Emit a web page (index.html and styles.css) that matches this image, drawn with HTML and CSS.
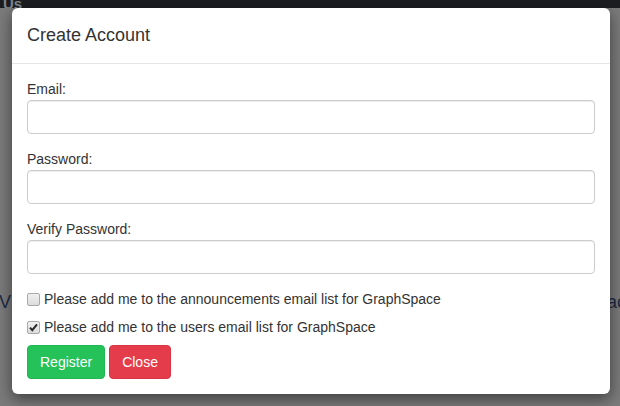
FILE: index.html
```html
<!DOCTYPE html>
<html>
<head>
<meta charset="utf-8">
<link rel="stylesheet" href="styles.css">
</head>
<body>
<div class="page">
  <div class="navbar"><span class="brand">Us</span></div>
  <div class="page-body">
    <div class="behind-row"><span class="behind-left">V</span><span class="behind-right">ac</span></div>
  </div>
</div>
<div class="modal">
  <div class="modal-header"><h4 class="modal-title">Create Account</h4></div>
  <div class="modal-body">
    <div class="form-group">
      <label class="lbl">Email:</label>
      <div class="input"></div>
    </div>
    <div class="form-group">
      <label class="lbl">Password:</label>
      <div class="input"></div>
    </div>
    <div class="form-group">
      <label class="lbl">Verify Password:</label>
      <div class="input"></div>
    </div>
    <div class="check-row first">
      <span class="cb"></span>
      <span class="check-text">Please add me to the announcements email list for GraphSpace</span>
    </div>
    <div class="check-row">
      <span class="cb"><svg width="11" height="11" viewBox="0 0 11 11"><path d="M2 5.6 L4.3 8.2 L9 2.4" fill="none" stroke="#2b2b2b" stroke-width="2.1"/></svg></span>
      <span class="check-text">Please add me to the users email list for GraphSpace</span>
    </div>
    <div class="buttons">
      <button class="btn btn-success">Register</button>
      <button class="btn btn-danger">Close</button>
    </div>
  </div>
</div>
</body>
</html>
```
FILE: styles.css
```css
html, body {
  margin: 0;
  padding: 0;
}
body {
  width: 620px;
  height: 406px;
  overflow: hidden;
  background: #7b7b7b;
  font-family: "Liberation Sans", Arial, sans-serif;
  position: relative;
}
.page {
  display: flex;
  flex-direction: column;
  height: 406px;
}
.navbar {
  height: 8px;
  background: #1c1d21;
  overflow: hidden;
}
.brand {
  display: block;
  margin-left: 3px;
  margin-top: -3px;
  font-weight: bold;
  font-size: 15px;
  line-height: 14px;
  color: #80858c;
}
.page-body {
  flex: 1;
  display: flex;
  flex-direction: column;
  padding-top: 282px;
}
.behind-row {
  display: flex;
  justify-content: space-between;
  font-size: 18px;
  line-height: 24px;
  color: #1e2a45;
}
.behind-left {
  margin-left: -1px;
}
.behind-right {
  margin-right: -6px;
}
.modal {
  position: absolute;
  left: 12px;
  top: 8px;
  width: 598px;
  background: #fff;
  border-radius: 6px;
  box-shadow: 0 5px 15px rgba(0, 0, 0, 0.5);
  color: #333;
}
.modal-header {
  padding: 15px;
  border-bottom: 1px solid #e5e5e5;
}
.modal-title {
  margin: 0;
  font-size: 18px;
  font-weight: normal;
  line-height: 25px;
  color: #333;
}
.modal-body {
  padding: 15px;
}
.form-group {
  margin-bottom: 15px;
}
.lbl {
  display: block;
  font-size: 14px;
  line-height: 20px;
  margin-bottom: 1px;
  color: #333;
}
.input {
  height: 34px;
  box-sizing: border-box;
  border: 1px solid #ccc;
  border-radius: 4px;
  background: #fff;
  box-shadow: inset 0 1px 1px rgba(0, 0, 0, 0.075);
}
.check-row {
  display: flex;
  align-items: center;
  height: 20px;
  margin-bottom: 8px;
  font-size: 14px;
}
.cb {
  width: 13px;
  height: 13px;
  box-sizing: border-box;
  border: 1px solid #a9a9a9;
  border-radius: 2px;
  background: linear-gradient(#f0f0f0, #dcdcdc);
  display: flex;
  align-items: center;
  justify-content: center;
  margin-right: 4px;
}
.cb svg {
  display: block;
}
.check-text {
  line-height: 20px;
  color: #333;
}
.buttons {
  display: flex;
  gap: 4px;
}
.btn {
  height: 34px;
  padding: 6px 12px;
  font-family: "Liberation Sans", Arial, sans-serif;
  font-size: 14px;
  line-height: 20px;
  border-radius: 4px;
  color: #fff;
  border: 1px solid transparent;
  box-sizing: border-box;
}
.btn-success {
  background: #25c25a;
  border-color: #22b553;
}
.btn-danger {
  background: #e43c4b;
  border-color: #d93444;
}
```
